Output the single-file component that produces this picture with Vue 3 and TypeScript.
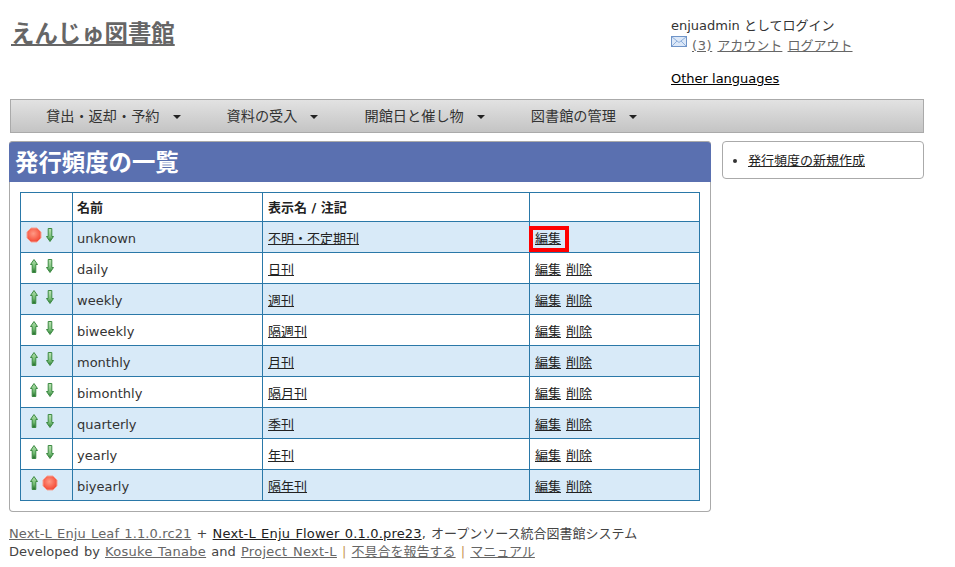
<script setup lang="ts">
interface Row { name: string; label: string; up: boolean; down: boolean; del: boolean; boxed?: boolean }
const rows: Row[] = [
  { name: 'unknown', label: '不明・不定期刊', up: false, down: true, del: false, boxed: true },
  { name: 'daily', label: '日刊', up: true, down: true, del: true },
  { name: 'weekly', label: '週刊', up: true, down: true, del: true },
  { name: 'biweekly', label: '隔週刊', up: true, down: true, del: true },
  { name: 'monthly', label: '月刊', up: true, down: true, del: true },
  { name: 'bimonthly', label: '隔月刊', up: true, down: true, del: true },
  { name: 'quarterly', label: '季刊', up: true, down: true, del: true },
  { name: 'yearly', label: '年刊', up: true, down: true, del: true },
  { name: 'biyearly', label: '隔年刊', up: true, down: false, del: true },
]
const menus = ['貸出・返却・予約', '資料の受入', '開館日と催し物', '図書館の管理']
</script>

<template>
  <div class="page">
    <svg class="defs" width="0" height="0">
      <defs>
        <linearGradient id="gr-up" x1="0" y1="0" x2="0" y2="1">
          <stop offset="0" stop-color="#b5e0b0" />
          <stop offset="0.6" stop-color="#6fbb70" />
          <stop offset="1" stop-color="#236b2a" />
        </linearGradient>
        <linearGradient id="gr-down" x1="0" y1="0" x2="0" y2="1">
          <stop offset="0" stop-color="#c0e4b8" />
          <stop offset="0.6" stop-color="#7cc27c" />
          <stop offset="1" stop-color="#2c7a34" />
        </linearGradient>
        <radialGradient id="gr-stop" cx="0.45" cy="0.4" r="0.6">
          <stop offset="0" stop-color="#ff9a86" />
          <stop offset="0.7" stop-color="#f8614c" />
          <stop offset="1" stop-color="#f04a38" />
        </radialGradient>
      </defs>
    </svg>
    <header class="top">
      <h1 class="brand"><a href="#">えんじゅ図書館</a></h1>
      <div class="user">
        <div>enjuadmin としてログイン</div>
        <div class="userlinks">
          <svg class="mail" width="16" height="11" viewBox="0 0 16 11">
            <rect x="0.5" y="0.5" width="15" height="10" fill="#dce8f8" stroke="#6f94c8" />
            <path d="M1 1l7 5.5 7-5.5M1 10l5-5M15 10l-5-5" fill="none" stroke="#8fb0dc" />
          </svg>
          <a href="#" class="grey count">(3)</a> <a href="#" class="grey">アカウント</a> <a href="#" class="grey">ログアウト</a>
        </div>
        <div class="lang"><a href="#">Other languages</a></div>
      </div>
    </header>

    <nav class="nav">
      <div v-for="m in menus" :key="m" class="menu">{{ m }}<span class="caret"></span></div>
    </nav>

    <div class="columns">
      <main class="panel">
        <h2 class="title">発行頻度の一覧</h2>
        <div class="tablewrap">
          <table>
            <colgroup>
              <col class="c1" /><col class="c2" /><col class="c3" /><col class="c4" />
            </colgroup>
            <thead>
              <tr><th></th><th class="namecell">名前</th><th>表示名 / 注記</th><th></th></tr>
            </thead>
            <tbody>
              <tr v-for="(r, i) in rows" :key="r.name" :class="{ odd: i % 2 === 0 }">
                <td class="icons">
                  <svg v-if="r.up" class="ico" width="16" height="16" viewBox="0 0 16 16">
                    <path d="M8 1.5 L11.5 6.5 H9.8 V14.5 H6.2 V6.5 H4.5 Z" fill="url(#gr-up)" stroke="#3c8a42" stroke-width="1" stroke-linejoin="round" />
                  </svg>
                  <svg v-else class="ico" width="16" height="16" viewBox="0 0 16 16">
                    <path d="M5 1 H11 L15 5 V11 L11 15 H5 L1 11 V5 Z" fill="url(#gr-stop)" stroke="#f5a396" stroke-width="1" stroke-linejoin="round" />
                  </svg>
                  <svg v-if="r.down" class="ico" width="16" height="16" viewBox="0 0 16 16">
                    <path d="M8 14.5 L11.5 9.5 H9.8 V1.5 H6.2 V9.5 H4.5 Z" fill="url(#gr-down)" stroke="#3c8a42" stroke-width="1" stroke-linejoin="round" />
                  </svg>
                  <svg v-else class="ico" width="16" height="16" viewBox="0 0 16 16">
                    <path d="M5 1 H11 L15 5 V11 L11 15 H5 L1 11 V5 Z" fill="url(#gr-stop)" stroke="#f5a396" stroke-width="1" stroke-linejoin="round" />
                  </svg>
                </td>
                <td class="namecell">{{ r.name }}</td>
                <td><a href="#">{{ r.label }}</a></td>
                <td class="actions">
                  <span :class="{ boxed: r.boxed }"><a href="#">編集</a></span>
                  <a v-if="r.del" href="#" class="del">削除</a>
                </td>
              </tr>
            </tbody>
          </table>
        </div>
      </main>
      <aside class="side">
        <ul>
          <li><a href="#">発行頻度の新規作成</a></li>
        </ul>
      </aside>
    </div>

    <footer class="foot">
      <div><a href="#" class="grey leaf">Next-L Enju Leaf 1.1.0.rc21</a> + <a href="#" class="flower">Next-L Enju Flower 0.1.0.pre23</a>, オープンソース統合図書館システム</div>
      <div>Developed by <a href="#" class="grey wide">Kosuke Tanabe</a> and <a href="#" class="grey wide">Project Next-L</a> <span class="sep">|</span> <a href="#" class="grey">不具合を報告する</a> <span class="sep">|</span> <a href="#" class="grey">マニュアル</a></div>
    </footer>
  </div>
</template>

<style scoped>
.page {
  width: 955px;
  height: 567px;
  overflow: hidden;
  font-family: "DejaVu Sans", "Noto Sans CJK JP", sans-serif;
  font-size: 13px;
  line-height: 18px;
  color: #333;
  background: #fff;
}
.defs { position: absolute; }
a { color: #222; text-decoration: underline; }
a.grey { color: #666; }
a.wide { letter-spacing: 0.3px; }
a.leaf { letter-spacing: 0.11px; }
a.flower { letter-spacing: 0.17px; }
.top {
  display: flex;
  height: 99px;
  box-sizing: border-box;
  padding: 16px 0 0 11px;
}
.brand {
  margin: 0;
  width: 660px;
  font-size: 23.4px;
  line-height: 36px;
  font-weight: bold;
}
.brand a { color: #666; }
.user { padding-top: 1px; width: 270px; }
.userlinks { margin-top: 1px; }
.mail { vertical-align: 3px; margin-right: 5px; }
.count { letter-spacing: 0.6px; }
.userlinks a { margin-right: 1px; }
.lang { margin-top: 15px; }
.lang a { color: #000; }
.nav {
  display: flex;
  margin: 0 31px 0 10px;
  height: 34px;
  box-sizing: border-box;
  border: 1px solid #aaa;
  background: linear-gradient(#e2e2e2, #c4c4c4);
  padding-left: 35px;
  align-items: center;
}
.menu { color: #333; margin-right: 46px; font-size: 14.2px; }
.caret {
  display: inline-block;
  width: 0;
  height: 0;
  margin-left: 13px;
  vertical-align: 2px;
  border-left: 4px solid transparent;
  border-right: 4px solid transparent;
  border-top: 4px solid #222;
}
.columns {
  display: flex;
  margin: 8px 0 0 9px;
  align-items: flex-start;
}
.panel {
  width: 702px;
  height: 371px;
  box-sizing: border-box;
  border: 1px solid #aaa;
  border-top: 0;
  border-radius: 4px;
}
.title {
  margin: 0 -1px;
  height: 41px;
  box-sizing: border-box;
  border-top: 1px solid #aaa;
  border-radius: 4px 4px 0 0;
  background: #5a70b0;
  color: #fff;
  font-size: 23.4px;
  line-height: 42px;
  font-weight: bold;
  padding-left: 6px;
}
.tablewrap { padding: 10px 10px 0 10px; }
table {
  width: 680px;
  table-layout: fixed;
  border-collapse: collapse;
}
.c1 { width: 52px; }
.c2 { width: 190px; }
.c3 { width: 267px; }
th, td {
  border: 1px solid #2a78a8;
  padding: 4px 5px 0;
  height: 30px;
  box-sizing: border-box;
  text-align: left;
  vertical-align: middle;
}
td { height: 31px; }
th { height: 29px; padding-top: 1px; font-size: 13px; font-weight: bold; color: #222; }
.namecell { padding-left: 4px; }
.odd td { background: #d8eaf8; }
td.icons { padding: 0 0 5px 5px; white-space: nowrap; line-height: 16px; }
.ico { display: inline-block; vertical-align: top; }
.del { margin-left: 5px; }
.boxed { position: relative; }
.boxed::before {
  content: "";
  position: absolute;
  left: -6px;
  top: -5px;
  right: -8px;
  bottom: -6px;
  border: 4px solid #f00;
  pointer-events: none;
}
.side {
  margin-left: 11px;
  width: 202px;
  height: 38px;
  box-sizing: border-box;
  border: 1px solid #aaa;
  border-radius: 4px;
}
.side ul { margin: 0; padding: 10px 0 0 25px; font-size: 13px; }
.foot {
  margin: 13px 0 0 9px;
  color: #444;
  word-spacing: 1px;
}
.sep { color: #c89858; }
</style>
